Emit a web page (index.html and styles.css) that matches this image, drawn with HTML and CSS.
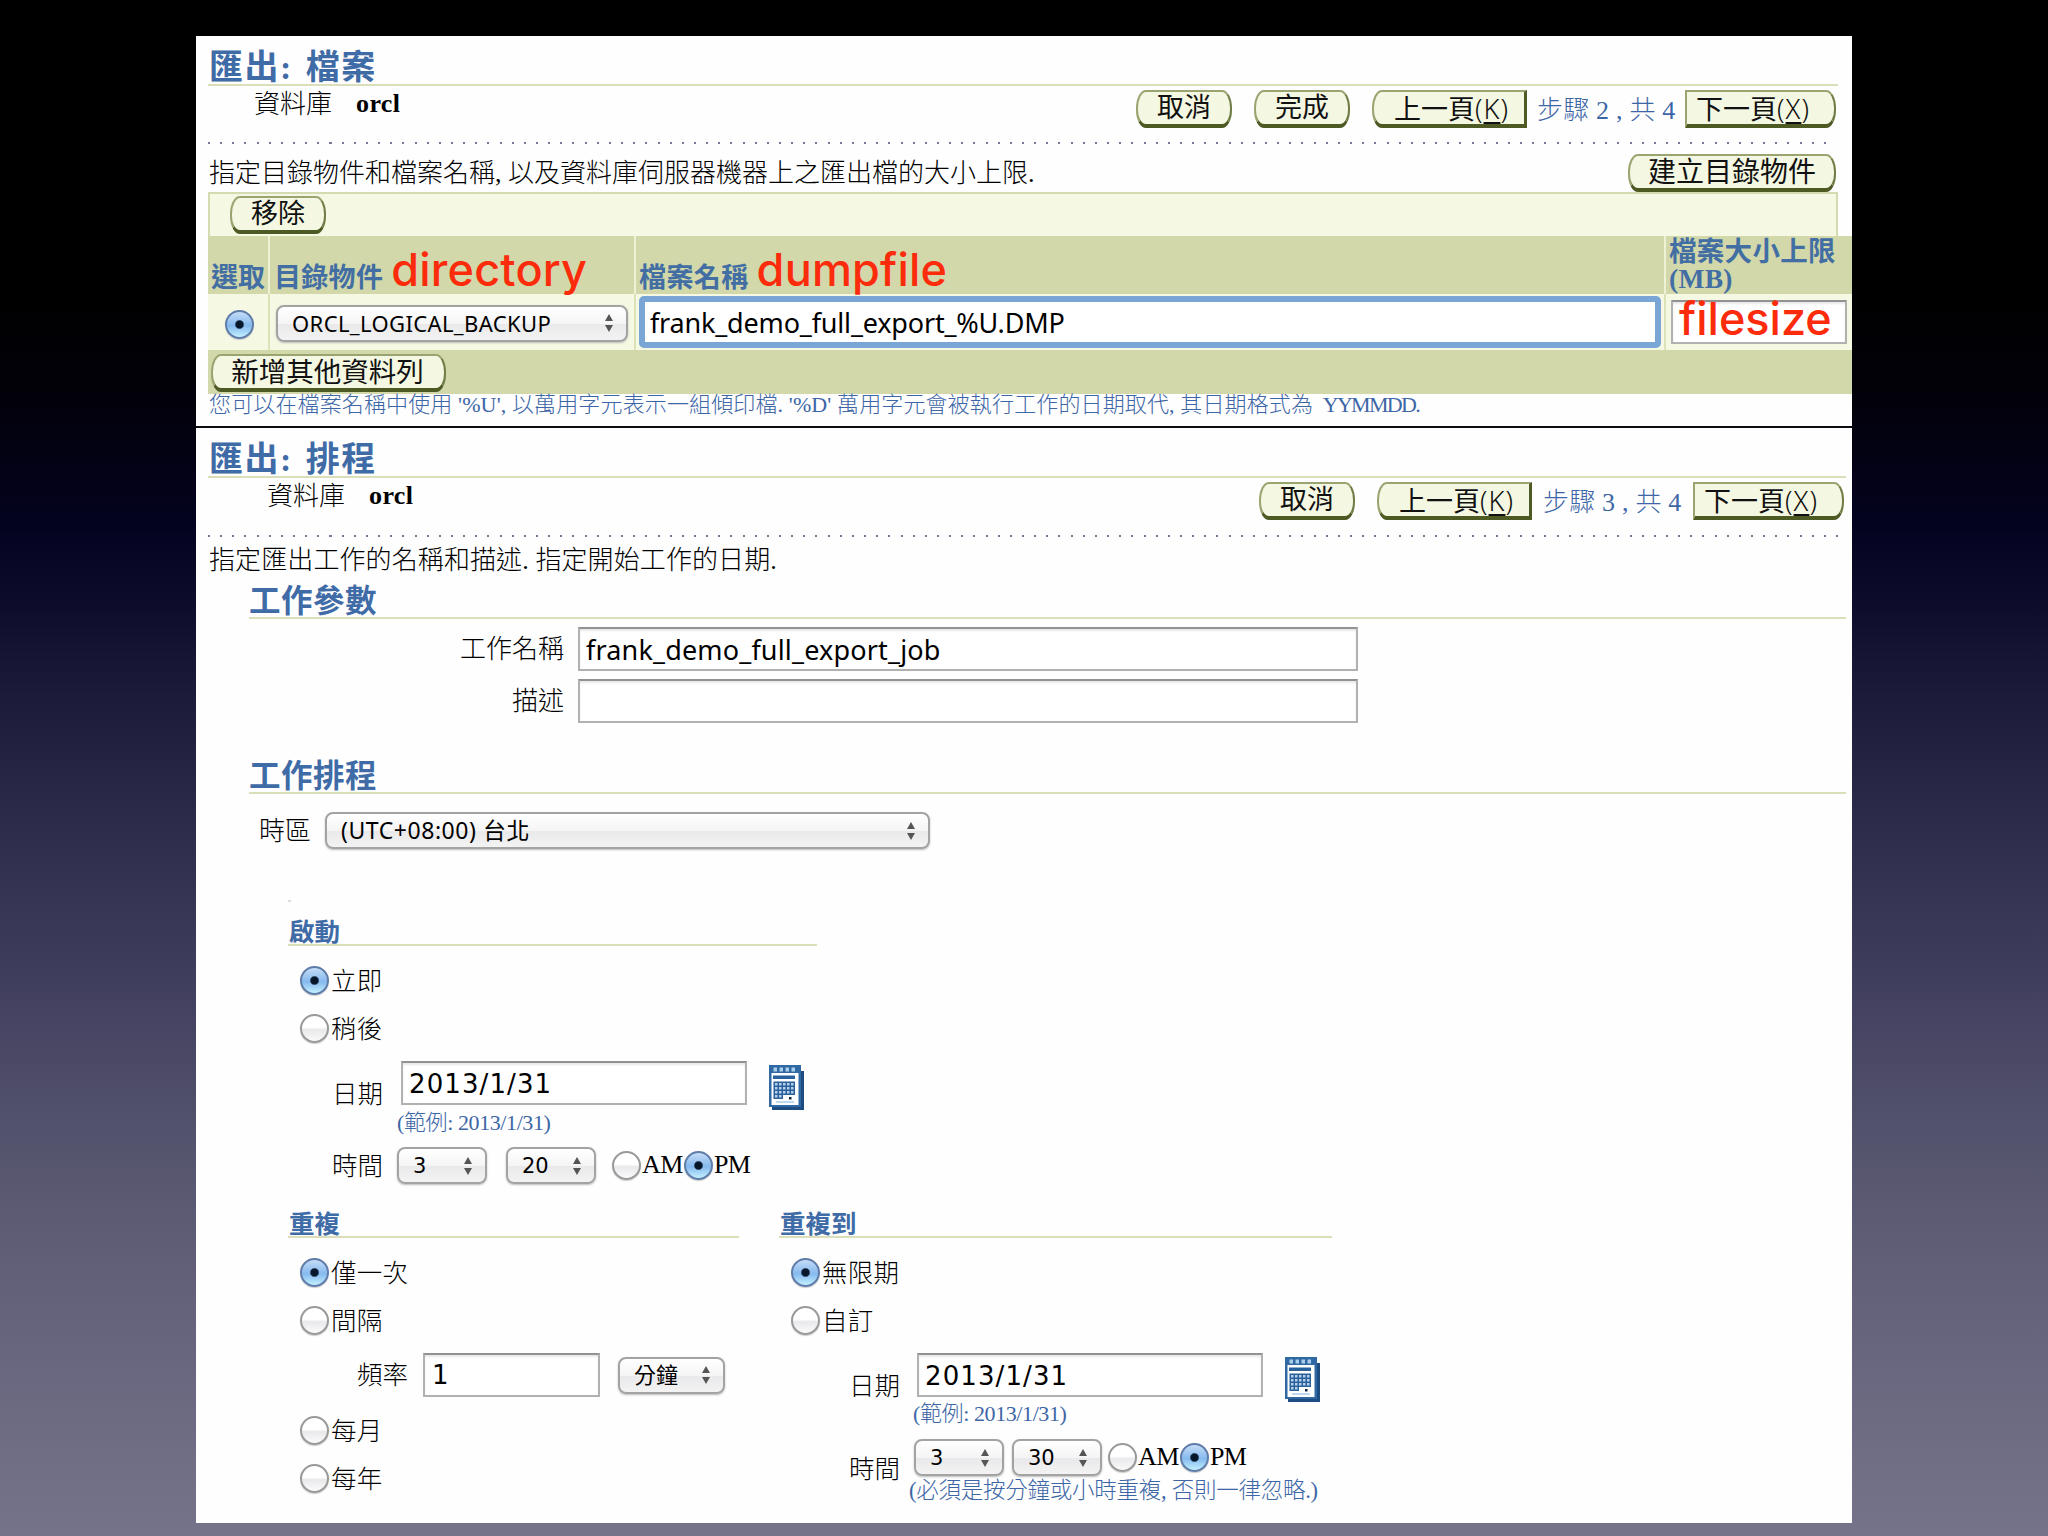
FILE: index.html
```html
<!DOCTYPE html>
<html lang="zh-Hant">
<head>
<meta charset="utf-8">
<title>匯出</title>
<link rel="stylesheet" href="styles.css">
</head>
<body>
<svg class="defs" width="0" height="0">
  <symbol id="updown" viewBox="0 0 10 18"><path d="M5 0L9 7H1ZM5 18L1 11H9Z" fill="#555"/></symbol>
  <symbol id="cal" viewBox="0 0 35 45">
    <path d="M3 5V45H35V6H31V5Z" fill="#1d4d80"/>
    <path d="M0 0H32V42H0Z" fill="#2f68a3"/>
    <path d="M2.500 8H29.500V40H2.500Z" fill="#fff"/>
    <path d="M4.500 2.500h3.500v4h-3.500zM10.500 2.500h3.500v4h-3.500zM16.500 2.500h3.500v4h-3.500zM22.500 2.500h3.500v4h-3.500z" fill="#a9cdea"/>
    <path d="M4 10.500H26V14H4ZM4.500 16.500H26V30H14V34H4.500Z" fill="#28619c"/>
    <path d="M6 18h2.500v2.500H6zM10 18h2.500v2.500H10zM14 18h2.500v2.500H14zM18 18h2.500v2.500H18zM22 18h2.500v2.500H22zM6 22h2.500v2.500H6zM10 22h2.500v2.500H10zM14 22h2.500v2.500H14zM18 22h2.500v2.500H18zM22 22h2.500v2.500H22zM6 26h2.500v2.500H6zM10 26h2.500v2.500H10zM14 26h2.500v2.500H14zM18 26h2.500v2.500H18zM22 26h2.500v2.500H22zM6 30h2.500v2.500H6zM10 30h2.500v2.500H10z" fill="#b5d0e8"/>
    <path d="M20 32h2.500v2.500h-2.500z" fill="#10243a"/>
    <path d="M7 37H25" stroke="#a5cdeb" stroke-width="1.500"/>
  </symbol>
</svg>
<main class="sheet">
  <section class="files">
    <h1 class="title">匯出: 檔案</h1>
    <div class="bar">
      <span class="db">資料庫</span><b class="sid">orcl</b>
      <div class="nav">
        <span class="btn short">取消</span><span class="btn short">完成</span><span class="btn prev">上一頁<span class="key">(<u>K</u>)</span></span>
        <span class="step">步驟 2 , 共 4</span><span class="btn next">下一頁<span class="key">(<u>X</u>)</span></span>
      </div>
    </div>
    <div class="dots"></div>
    <div class="intro"><p class="desc">指定目錄物件和檔案名稱, 以及資料庫伺服器機器上之匯出檔的大小上限.</p><span class="btn create">建立目錄物件</span></div>
    <div class="tools"><span class="btn short">移除</span></div>
    <div class="grid head">
      <div class="cell">選取</div>
      <div class="cell">目錄物件<em class="note n1">directory</em></div>
      <div class="cell">檔案名稱<em class="note n2">dumpfile</em></div>
      <div class="cell size">檔案大小上限<br>(MB)</div>
    </div>
    <div class="grid row">
      <div class="cell"><i class="radio on"></i></div>
      <div class="cell"><span class="select dir"><span class="val">ORCL_LOGICAL_BACKUP</span><svg class="ud"><use href="#updown"/></svg></span></div>
      <div class="cell"><input class="field focus" value="frank_demo_full_export_%U.DMP"></div>
      <div class="cell"><span class="field fsize"><em class="note n3">filesize</em></span></div>
    </div>
    <div class="foot"><span class="btn add">新增其他資料列</span></div>
    <p class="tip">您可以在檔案名稱中使用 '%U', 以萬用字元表示一組傾印檔. '%D' 萬用字元會被執行工作的日期取代, 其日期格式為 <span class="fmt">YYMMDD.</span></p>
  </section>

  <section class="schedule">
    <h1 class="title">匯出: 排程</h1>
    <div class="bar">
      <span class="db">資料庫</span><b class="sid">orcl</b>
      <div class="nav">
        <span class="btn short">取消</span><span class="btn prev">上一頁<span class="key">(<u>K</u>)</span></span>
        <span class="step">步驟 3 , 共 4</span><span class="btn next">下一頁<span class="key">(<u>X</u>)</span></span>
      </div>
    </div>
    <div class="dots"></div>
    <p class="desc">指定匯出工作的名稱和描述. 指定開始工作的日期.</p>
    <h2 class="sub params">工作參數</h2>
    <div class="form"><label class="lab">工作名稱</label><input class="field" value="frank_demo_full_export_job"></div>
    <div class="form"><label class="lab">描述</label><input class="field" value=""></div>
    <h2 class="sub sched">工作排程</h2>
    <div class="zone"><label class="lab">時區</label><span class="select tz"><span class="val">(UTC+08:00) 台北</span><svg class="ud"><use href="#updown"/></svg></span></div>

    <div class="block start">
      <h3 class="cap">啟動</h3>
      <div class="opt"><i class="radio on"></i>立即</div>
      <div class="opt"><i class="radio"></i>稍後</div>
      <div class="date"><label class="lab">日期</label><input class="field" value="2013/1/31"><svg class="cal"><use href="#cal"/></svg></div>
      <p class="eg">(範例: 2013/1/31)</p>
      <div class="time"><label class="lab">時間</label>
        <span class="select num"><span class="val">3</span><svg class="ud"><use href="#updown"/></svg></span>
        <span class="select num"><span class="val">20</span><svg class="ud"><use href="#updown"/></svg></span>
        <i class="radio"></i><span class="ap">AM</span><i class="radio on"></i><span class="ap">PM</span>
      </div>
    </div>

    <div class="pair">
      <div class="block repeat">
        <h3 class="cap">重複</h3>
        <div class="opt"><i class="radio on"></i>僅一次</div>
        <div class="opt"><i class="radio"></i>間隔</div>
        <div class="freq"><label class="lab">頻率</label><input class="field" value="1"><span class="select unit"><span class="val">分鐘</span><svg class="ud"><use href="#updown"/></svg></span></div>
        <div class="opt"><i class="radio"></i>每月</div>
        <div class="opt"><i class="radio"></i>每年</div>
      </div>
      <div class="block until">
        <h3 class="cap">重複到</h3>
        <div class="opt"><i class="radio on"></i>無限期</div>
        <div class="opt"><i class="radio"></i>自訂</div>
        <div class="date"><label class="lab">日期</label><input class="field" value="2013/1/31"><svg class="cal"><use href="#cal"/></svg></div>
        <p class="eg">(範例: 2013/1/31)</p>
        <div class="time"><label class="lab">時間</label>
          <span class="select num"><span class="val">3</span><svg class="ud"><use href="#updown"/></svg></span>
          <span class="select num"><span class="val">30</span><svg class="ud"><use href="#updown"/></svg></span>
          <i class="radio"></i><span class="ap">AM</span><i class="radio on"></i><span class="ap">PM</span>
        </div>
        <p class="eg must">(必須是按分鐘或小時重複, 否則一律忽略.)</p>
      </div>
    </div>
  </section>
</main>
</body>
</html>
```
FILE: styles.css
```css
* { box-sizing: border-box; margin: 0; padding: 0; }
body {
  width: 2048px; height: 1536px; overflow: hidden;
  background: linear-gradient(#000 0, #000 290px, #020109 390px, #040320 530px, #0e0d2b 610px, #1b1a38 690px, #2e2c4b 830px, #413f5e 985px, #53526c 1127px, #626079 1273px, #706f86 1470px, #747389 1536px);
  font-family: "Liberation Serif", "Noto Sans CJK TC", serif;
  font-size: 26px; color: #000;
}
.defs { display: block; }
.sheet { width: 1656px; height: 1487px; margin: 36px 0 0 196px; background: #fefefe; overflow: hidden; white-space: nowrap; }
.files { height: 392px; border-bottom: 2px solid #0c0c12; }

/* page header */
.title { height: 50px; margin: 0 14px 0 12px; padding: 15px 0 0 1px; border-bottom: 2px solid #dadfb9; font-size: 34px; line-height: 34px; letter-spacing: 1.5px; word-spacing: 3px; color: #3f6ba6; }
.bar { display: flex; align-items: flex-start; height: 56px; margin-right: 16px; padding-left: 58px; line-height: 34px; }
.db { width: 102px; padding-top: 2px; font-weight: 300; }
.sid { padding-top: 2px; line-height: 32px; letter-spacing: .4px; }
.nav { display: flex; margin: 4px 0 0 auto; }
.btn {
  height: 38px; flex: none; text-align: center; font-size: 27px; line-height: 33px; color: #111;
  background: #f4f7e1; border: 2px solid #9aa471; border-bottom: 4px solid #4d5a24; border-right-color: #6f7c45;
  border-radius: 10px / 18px;
}
.key { font-family: "Noto Sans", sans-serif; font-weight: 300; letter-spacing: 1px; }
.btn u { text-underline-offset: 3px; text-decoration-thickness: 2px; }
.short { width: 96px; }
.nav .short { margin-right: 22px; }
.prev { width: 155px; padding-left: 5px; border-top-right-radius: 0; border-bottom-right-radius: 0; border-right: 3px solid #4d5a24; }
.next { width: 151px; padding-right: 15px; border-top-left-radius: 0; border-bottom-left-radius: 0; }
.step { width: 158px; padding-left: 10px; font-size: 26px; line-height: 41px; color: #3d66a6; font-weight: 300; letter-spacing: .2px; }
.dots { height: 2px; margin: 0 18px 0 12px; background: repeating-linear-gradient(90deg, #777796 0 2px, transparent 2px 12.15px); }
.desc { font-size: 26px; font-weight: 300; line-height: 36px; }
.intro { display: flex; justify-content: space-between; align-items: flex-end; height: 48px; padding: 0 16px 0 13px; }
.intro .desc { height: 36px; }
.create { width: 208px; font-size: 28px; }

/* file table */
.tools { display: flex; height: 44px; margin: 0 14px 0 12px; padding: 2px 0 0 20px; background: #f5f8e2; border: 2px solid #d5dbb0; border-bottom: 0; }
.grid { display: grid; grid-template-columns: 60px 366px 1030px 188px; margin-left: 12px; }
.cell + .cell { border-left: 2px solid #eef1d4; }
.head { height: 58px; background: #d2d8aa; font-size: 27px; font-weight: 700; color: #426ea3; }
.head .cell { display: flex; align-items: flex-end; padding: 0 0 0 3px; line-height: 32px; }
.head .cell:nth-child(2) { padding-left: 4px; letter-spacing: .3px; }
.head .cell:nth-child(3) { letter-spacing: .4px; }
.head .size { display: block; font-size: 27.500px; line-height: 26.500px; padding-top: 3px; letter-spacing: .3px; }
.note { font: 500 45px/46px Inter, sans-serif; letter-spacing: .2px; color: #fb2b0b; }
.n1, .n2 { margin: 0 0 1px 8px; }
.row { height: 56px; background: #f5f8e2; }
.row .cell { display: flex; align-items: center; }
.row .cell + .cell { border-left-color: #dce1b8; }
.row .radio { margin-left: 17px; margin-top: 4px; }
.foot { display: flex; height: 44px; margin-left: 12px; padding: 4px 0 0 3px; background: #d2d8aa; }
.add { width: 235px; padding-right: 2px; font-size: 27.500px; }
.tip { padding-left: 13px; font-size: 22px; line-height: 22px; font-weight: 300; letter-spacing: .13px; color: #3d66a6; }
.fmt { margin-left: 4px; letter-spacing: -1.7px; }

/* controls */
.radio { flex: none; width: 29px; height: 29px; border: 2px solid #999; border-radius: 50%; background: linear-gradient(#fff 45%, #e9e9ec 55%, #fafafa); box-shadow: 0 1px 1px #ccc; }
.radio.on { border-color: #5f7da8; background: radial-gradient(circle, #06172c 0 3.500px, transparent 5px), linear-gradient(#c5dcf6, #85b9ee 55%, #c2f0ff); }
.field { display: block; height: 44px; border: 2px solid #b1b1b1; border-top-color: #929292; background: #fff; box-shadow: inset 0 2px 2px #e8e8e8; color: #000; font: 400 27px "Noto Sans", "Noto Sans CJK TC", sans-serif; padding: 0 6px; outline: 0; }
.focus { width: 1022px; height: 52px; margin-left: 3px; border: 6px solid #79a6d5; border-radius: 5px; box-shadow: none; padding: 0 0 0 5px; letter-spacing: -.17px; }
.fsize { width: 176px; margin: 0 0 0 5px; padding: 0 6px; }
.n3 { display: block; margin-top: -6px; letter-spacing: 0; }
.select { display: flex; align-items: center; justify-content: space-between; flex: none; height: 37px; padding: 0 12px 0 14px; border: 2px solid #a3a3a3; border-radius: 8px; background: linear-gradient(#fff 0, #f5f5f5 50%, #e9e9eb 52%, #f3f3f3); box-shadow: 0 1px 2px #bbb; font: 400 22px/32px "Noto Sans", "Noto Sans CJK TC", sans-serif; }
.ud { width: 10px; height: 18px; flex: none; }
.dir { width: 352px; margin: 2px 0 0 6px; letter-spacing: .38px; }
.cal { width: 35px; height: 45px; flex: none; }

/* schedule */
.schedule .title { margin-right: 6px; }
.schedule .bar { height: 57px; margin-right: 8px; padding-left: 71px; }
.schedule .desc { height: 40px; padding: 6px 0 0 13px; letter-spacing: .1px; }
.schedule .dots { margin-right: 12px; }
.schedule .step { width: 161px; padding-left: 11px; }
.sub { margin: 0 6px 0 53px; border-bottom: 2px solid #dadfb9; font-size: 31.500px; line-height: 32px; letter-spacing: .5px; color: #3f6ba6; }
.params { height: 42px; padding-top: 9px; margin-bottom: 8px; }
.sched { height: 63px; padding-top: 30px; margin-top: 8px; margin-bottom: 18px; }
.form { display: flex; align-items: center; height: 44px; margin-bottom: 8px; }
.form .lab { width: 382px; padding-right: 14px; text-align: right; }
.form .field { width: 780px; letter-spacing: .17px; }
.lab { flex: none; padding-bottom: 5px; font-weight: 300; }
.zone { display: flex; align-items: center; height: 37px; padding-left: 63px; }
.zone .lab { width: 66px; }
.tz { width: 605px; font-size: 23px; line-height: 30px; letter-spacing: .55px; }
.tz .val { padding-bottom: 2px; }
.block { font-size: 25.500px; }
.cap { height: 30px; padding: 3px 0 0 1px; border-bottom: 2px solid #dadfb9; font-size: 25.500px; line-height: 27px; color: #3f6ba6; }
.opt { display: flex; align-items: center; gap: 2px; height: 29px; margin: 0 0 19px 12px; padding-bottom: 4px; font-weight: 300; letter-spacing: .3px; }
.opt .radio { margin-top: 4px; }
.cap + .opt { margin-top: 20px; }
.start { width: 529px; margin: 51px 0 0 92px; }
.start::before { content: ""; display: block; width: 3px; height: 2px; margin-bottom: 14px; background: #dcdcdc; }
.date { display: flex; align-items: flex-start; height: 50px; margin-top: -1px; }
.date .lab { line-height: 68px; }
.date .field { width: 346px; padding-top: 2px; font: 400 26px "DejaVu Sans", sans-serif; letter-spacing: 1.1px; }
.date .cal { margin: 4px 0 0 22px; }
.start .date, .start .time { padding-left: 44px; }
.start .lab { width: 69px; }
.eg { margin-left: 109px; font-size: 22px; line-height: 24px; letter-spacing: -.4px; color: #3d66a6; font-weight: 300; }
.time { display: flex; align-items: center; height: 37px; }
.num { width: 90px; font: 400 21px/32px "DejaVu Sans", sans-serif; }
.start .time { margin-top: 12px; }
.start .num { margin-right: 19px; }
.start .num + .num { margin-right: 16px; }
.start .time .lab { width: 65px; }
.time .radio { margin-right: 1px; }
.ap { width: 42px; padding-bottom: 1px; font-size: 26px; letter-spacing: -.6px; }
.pair { display: flex; gap: 40px; margin: 24px 0 0 92px; }
.repeat { width: 451px; }
.until { width: 553px; }
.freq { display: flex; align-items: center; height: 44px; margin: -1px 0 19px 69px; }
.freq .lab { width: 66px; padding-bottom: 5px; }
.freq .field { width: 177px; margin-right: 18px; padding-left: 7px; font: 400 26px "DejaVu Sans", sans-serif; }
.unit { width: 107px; line-height: 30px; }
.unit .val { padding-bottom: 2px; }
.until .date { height: 49px; padding-left: 70px; }
.until .date .lab { width: 68px; }
.until .eg { margin-left: 134px; }
.until .time { padding-left: 70px; margin-top: 13px; }
.until .time .lab { width: 65px; align-self: flex-start; line-height: 30px; margin-top: 16px; }
.until .num { margin-right: 8px; }
.until .num + .num { margin-right: 6px; }
.until .must { margin: 3px 0 0 130px; font-size: 22.500px; letter-spacing: -.25px; }
```
